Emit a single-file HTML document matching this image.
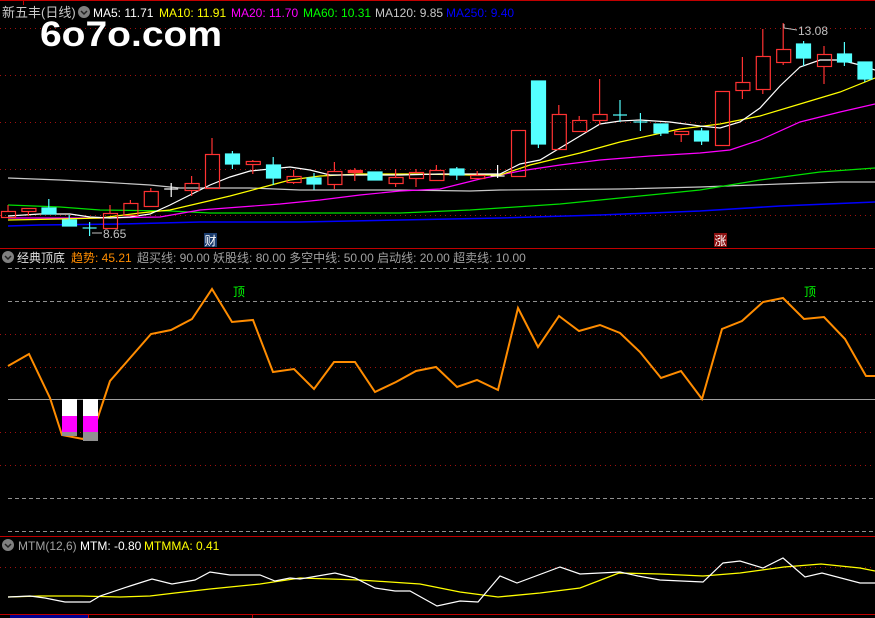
<!DOCTYPE html>
<html><head><meta charset="utf-8"><style>
html,body{margin:0;padding:0;background:#000;width:875px;height:618px;overflow:hidden}
svg{display:block}
text{font-family:"Liberation Sans","Noto Sans CJK SC",sans-serif;font-size:12px}
</style></head><body>
<svg width="875" height="618" viewBox="0 0 875 618" xmlns="http://www.w3.org/2000/svg">
<rect width="875" height="618" fill="#000"/>
<g stroke="#a01010" stroke-width="1" stroke-dasharray="1,4">
<line x1="0" y1="28.5" x2="875" y2="28.5"/><line x1="0" y1="75.5" x2="875" y2="75.5"/>
<line x1="0" y1="122.5" x2="875" y2="122.5"/><line x1="0" y1="169.5" x2="875" y2="169.5"/>
<line x1="0" y1="215.5" x2="875" y2="215.5"/>
</g>
<line x1="0" y1="0.5" x2="875" y2="0.5" stroke="#c00000"/>
<line x1="23.5" y1="0" x2="23.5" y2="5" stroke="#c00000"/>
<line x1="0" y1="248.5" x2="875" y2="248.5" stroke="#c00000"/>
<g fill="none" stroke-width="1.2">
<polyline stroke="#0000ff" stroke-width="1.5" points="8,226 40,225 120,224 200,222 300,222 400,220 500,218 600,215 700,211 780,206 875,202"/>
<polyline stroke="#c8c8c8" points="8,178 60,180 100,182 150,185 180,188 250,188 300,190 400,190 470,191 500,190 620,189 700,187 780,184 840,182 875,182"/>
<polyline stroke="#00e000" points="8,205 60,207 100,210 170,211 210,213 300,213 400,213 470,210 500,208 560,204 620,198 700,190 760,180 820,172 875,168"/>
<polyline stroke="#ff00ff" points="8,218 100,218 160,217 200,210 240,207 280,204 320,200 360,195 400,191 440,189 480,179 520,171 560,165 600,160 650,156 700,153 730,150 760,140 800,122 840,112 875,104"/>
<polyline stroke="#ffff00" points="8,220 60,219 100,218 140,213 170,210 200,203 230,196 260,188 290,180 320,176 360,174 420,174 470,175 500,175 530,165 580,153 620,142 680,129 720,124 760,116 800,104 840,92 875,78"/>
<polyline stroke="#ffffff" points="8,216 40,214 70,214 90,217 110,218 130,217 150,214 170,205 190,195 210,185 230,177 250,171 270,169 290,167 310,170 330,175 350,175 370,175 400,175 440,174 480,174 500,174 520,164 540,160 560,148 580,136 600,124 620,121 640,120 670,122 700,126 720,128 740,122 760,108 780,86 800,67 820,60 840,60 860,65 875,70"/>
</g>
<g stroke="#ff3232" fill="none" stroke-width="1.2">
<line x1="8" y1="205" x2="8" y2="211"/><rect x="1.5" y="211.5" width="14" height="6"/>
<line x1="28.4" y1="211" x2="28.4" y2="216"/><rect x="21.9" y="208.5" width="14" height="3"/>
<rect x="103.5" y="213.5" width="14" height="15"/><line x1="110" y1="205" x2="110" y2="213"/>
<rect x="123.9" y="203.5" width="14" height="12"/><line x1="130.4" y1="200" x2="130.4" y2="203"/>
<rect x="144.3" y="191.5" width="14" height="15"/><line x1="150.8" y1="188" x2="150.8" y2="191"/>
<rect x="185.1" y="183.5" width="14" height="7"/><line x1="191.6" y1="176" x2="191.6" y2="183"/><line x1="191.6" y1="190" x2="191.6" y2="196"/>
<rect x="205.5" y="154.5" width="14" height="34"/><line x1="212" y1="138" x2="212" y2="154"/>
<rect x="246.3" y="161.5" width="14" height="3"/><line x1="252.8" y1="160" x2="252.8" y2="161"/><line x1="252.8" y1="164" x2="252.8" y2="174"/>
<rect x="287.1" y="176.5" width="14" height="6"/><line x1="293.6" y1="170" x2="293.6" y2="176"/><line x1="293.6" y1="182" x2="293.6" y2="184"/>
<rect x="327.9" y="171.5" width="14" height="13"/><line x1="334.4" y1="162" x2="334.4" y2="171"/><line x1="334.4" y1="184" x2="334.4" y2="189"/>
<rect x="348.3" y="170.5" width="14" height="2" fill="#ff3232"/><line x1="354.8" y1="168" x2="354.8" y2="181"/>
<rect x="389.1" y="177.5" width="14" height="6"/><line x1="395.6" y1="169" x2="395.6" y2="177"/><line x1="395.6" y1="183" x2="395.6" y2="187"/>
<rect x="409.5" y="172.5" width="14" height="6"/><line x1="416" y1="169" x2="416" y2="172"/><line x1="416" y1="178" x2="416" y2="187"/>
<rect x="429.9" y="170.5" width="14" height="10"/><line x1="436.4" y1="165" x2="436.4" y2="170"/>
<rect x="470.7" y="175.5" width="14" height="3"/><line x1="477.2" y1="171" x2="477.2" y2="175"/>
<rect x="511.5" y="130.5" width="14" height="46"/>
<rect x="552.3" y="114.5" width="14" height="35"/><line x1="558.8" y1="105" x2="558.8" y2="114"/>
<rect x="572.7" y="120.5" width="14" height="11"/><line x1="579.2" y1="116" x2="579.2" y2="120"/>
<rect x="593.1" y="114.5" width="14" height="6"/><line x1="599.6" y1="79" x2="599.6" y2="114"/><line x1="599.6" y1="120" x2="599.6" y2="125"/>
<rect x="674.7" y="131.5" width="14" height="3"/><line x1="681.2" y1="134" x2="681.2" y2="142"/>
<rect x="715.5" y="91.5" width="14" height="54"/>
<rect x="735.9" y="82.5" width="14" height="8"/><line x1="742.4" y1="57" x2="742.4" y2="82"/><line x1="742.4" y1="90" x2="742.4" y2="99"/>
<rect x="756.3" y="56.5" width="14" height="33"/><line x1="762.8" y1="29" x2="762.8" y2="56"/><line x1="762.8" y1="89" x2="762.8" y2="94"/>
<rect x="776.7" y="49.5" width="14" height="13"/><line x1="783.2" y1="23" x2="783.2" y2="49"/><line x1="783.2" y1="62" x2="783.2" y2="65"/>
<rect x="817.5" y="54.5" width="14" height="12"/><line x1="824" y1="46" x2="824" y2="54"/><line x1="824" y1="66" x2="824" y2="84"/>
</g>
<g fill="#54ffff" stroke="#54ffff" stroke-width="1.2">
<rect x="42" y="208" width="14" height="6"/><line x1="48.8" y1="199" x2="48.8" y2="208"/>
<rect x="62.5" y="220" width="14" height="6"/><line x1="69.2" y1="215" x2="69.2" y2="220"/>
<line x1="89.6" y1="222" x2="89.6" y2="236"/><line x1="82.6" y1="228" x2="96.6" y2="228"/>
<rect x="225.5" y="154" width="14" height="10"/><line x1="232.4" y1="151" x2="232.4" y2="169"/>
<rect x="266.5" y="165" width="14" height="13"/><line x1="273.2" y1="157" x2="273.2" y2="185"/>
<rect x="307" y="178" width="14" height="6"/><line x1="314" y1="173" x2="314" y2="190"/>
<rect x="368" y="172" width="14" height="8"/>
<rect x="450" y="169" width="14" height="6"/><line x1="456.8" y1="167" x2="456.8" y2="180"/>
<rect x="531.5" y="81" width="14" height="63"/><line x1="538.4" y1="144" x2="538.4" y2="148"/>
<line x1="620" y1="100" x2="620" y2="122"/><line x1="613" y1="115" x2="627" y2="115"/>
<line x1="640.4" y1="113" x2="640.4" y2="131"/><line x1="633.4" y1="122" x2="647.4" y2="122"/>
<rect x="654" y="124" width="14" height="9"/><line x1="660.8" y1="133" x2="660.8" y2="136"/>
<rect x="694.5" y="131" width="14" height="10"/><line x1="701.6" y1="128" x2="701.6" y2="145"/>
<rect x="796.5" y="44" width="14" height="14"/><line x1="803.6" y1="41" x2="803.6" y2="66"/>
<rect x="837.5" y="54" width="14" height="8"/><line x1="844.4" y1="42" x2="844.4" y2="66"/>
<rect x="858" y="62" width="14" height="17"/><line x1="864.8" y1="79" x2="864.8" y2="82"/>
</g>
<g stroke="#fff" stroke-width="1.2">
<line x1="171.2" y1="183" x2="171.2" y2="197"/><line x1="164.2" y1="189" x2="178.2" y2="189"/>
<line x1="497.6" y1="165" x2="497.6" y2="178"/><line x1="490.6" y1="176" x2="504.6" y2="176"/>
</g>
<text x="103" y="238" fill="#c0c0c0">8.65</text>
<line x1="92" y1="233" x2="102" y2="233" stroke="#c0c0c0"/>
<text x="798" y="35" fill="#c0c0c0">13.08</text>
<polyline points="784,24 784,28 797,30" fill="none" stroke="#c0c0c0"/>
<rect x="204" y="233" width="13" height="14" fill="#1a3c6e"/><text x="204.5" y="245" fill="#fff">财</text>
<rect x="714" y="233" width="13" height="14" fill="#8a1010"/><text x="714.5" y="245" fill="#fff">涨</text>
<text x="2" y="17" fill="#c8c8c8" style="font-size:13px">新五丰(日线)</text>
<circle cx="84" cy="12" r="6" fill="#808080"/><path d="M81 11 L84 14 L87 11" stroke="#222" fill="none" stroke-width="1.5"/>
<text x="93" y="17" fill="#fff">MA5: 11.71</text>
<text x="159" y="17" fill="#ffff00">MA10: 11.91</text>
<text x="231" y="17" fill="#ff00ff">MA20: 11.70</text>
<text x="303" y="17" fill="#00ff00">MA60: 10.31</text>
<text x="375" y="17" fill="#c8c8c8">MA120: 9.85</text>
<text x="446" y="17" fill="#0000ff">MA250: 9.40</text>
<text x="40" y="46" fill="#fff" style="font-size:35px;font-weight:bold" textLength="182" lengthAdjust="spacingAndGlyphs">6o7o.com</text>
<circle cx="8" cy="257" r="6" fill="#808080"/><path d="M5 256 L8 259 L11 256" stroke="#222" fill="none" stroke-width="1.5"/>
<text x="17" y="262" fill="#e0e0e0">经典顶底</text>
<text x="71" y="262" fill="#ff8c00">趋势: 45.21</text>
<text x="137" y="262" fill="#a0a0a0">超买线: 90.00  妖股线: 80.00  多空中线: 50.00  启动线: 20.00  超卖线: 10.00</text>
<g stroke="#909090" stroke-dasharray="4,3"><line x1="8" y1="268.5" x2="875" y2="268.5"/><line x1="8" y1="301.5" x2="875" y2="301.5"/><line x1="8" y1="498.5" x2="875" y2="498.5"/><line x1="8" y1="531.5" x2="875" y2="531.5"/></g>
<g stroke="#a01010" stroke-dasharray="1,4"><line x1="0" y1="334.5" x2="875" y2="334.5"/><line x1="0" y1="367.5" x2="875" y2="367.5"/><line x1="0" y1="432.5" x2="875" y2="432.5"/><line x1="0" y1="465.5" x2="875" y2="465.5"/></g>
<line x1="8" y1="399.5" x2="875" y2="399.5" stroke="#a0a0a0"/>
<line x1="0" y1="536.5" x2="875" y2="536.5" stroke="#c00000"/>
<polyline fill="none" stroke="#ff8c00" stroke-width="2" points="8,366 29,354 50,398 62,435 83,439 97,420 110,381 151,334 171,330 192,319 212,289 232,322 253,320 273,372 294,369 314,389 334,362 355,362 375,392 396,382 416,371 436,367 457,387 477,380 498,390 518,308 538,347 559,316 579,331 600,325 620,333 640,352 661,378 681,371 702,399 722,329 742,321 763,302 783,298 804,319 824,317 845,339 866,376 875,376"/>
<rect x="62" y="399" width="15" height="17" fill="#fff"/><rect x="62" y="416" width="15" height="16" fill="#ff00ff"/><rect x="62" y="432" width="15" height="4" fill="#909090"/>
<rect x="83" y="399" width="15" height="17" fill="#fff"/><rect x="83" y="416" width="15" height="16" fill="#ff00ff"/><rect x="83" y="432" width="15" height="9" fill="#909090"/>
<text x="233" y="296" fill="#00ff00">顶</text>
<text x="804" y="296" fill="#00ff00">顶</text>
<circle cx="8" cy="545" r="6" fill="#808080"/><path d="M5 544 L8 547 L11 544" stroke="#222" fill="none" stroke-width="1.5"/>
<text x="18" y="550" fill="#a0a0a0">MTM(12,6)</text>
<text x="80" y="550" fill="#fff">MTM: -0.80</text>
<text x="144" y="550" fill="#ffff00">MTMMA: 0.41</text>
<line x1="0" y1="567.5" x2="875" y2="567.5" stroke="#a01010" stroke-dasharray="1,4"/>
<polyline fill="none" stroke="#ffff00" stroke-width="1.3" points="8,597 40,596 80,596 120,597 150,596 175,593 210,589 260,584 300,578 360,580 420,584 460,592 498,597 540,593 580,588 619,573 660,574 703,576 740,573 784,567 821,564 860,568 875,571"/>
<polyline fill="none" stroke="#fff" stroke-width="1.2" points="8,597 30,596 45,598 65,602 90,602 100,596 130,586 152,579 172,584 195,580 210,572 230,575 260,575 275,581 290,578 300,579 335,573 355,578 375,588 395,591 410,591 437,606 460,601 478,602 500,576 517,583 560,567 580,574 620,572 638,576 660,580 703,582 723,563 740,561 763,568 783,558 805,577 822,573 860,583 875,583"/>
<line x1="0" y1="614.5" x2="875" y2="614.5" stroke="#c00000"/>
<rect x="10" y="615" width="78" height="3" fill="#000090"/>
<line x1="88.5" y1="614" x2="88.5" y2="618" stroke="#c00000"/><line x1="252.5" y1="614" x2="252.5" y2="618" stroke="#c00000"/>
</svg>
</body></html>
